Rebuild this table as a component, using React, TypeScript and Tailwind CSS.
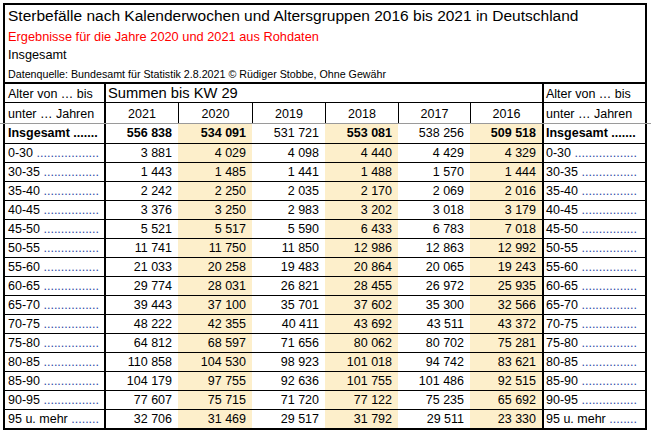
import React from "react";

type Row = { label: string; dots: number; vals: string[] };

const data: Row[] = [
  { label: "0-30", dots: 18, vals: ["3 881", "4 029", "4 098", "4 440", "4 429", "4 329"] },
  { label: "30-35", dots: 16, vals: ["1 443", "1 485", "1 441", "1 488", "1 570", "1 444"] },
  { label: "35-40", dots: 16, vals: ["2 242", "2 250", "2 035", "2 170", "2 069", "2 016"] },
  { label: "40-45", dots: 16, vals: ["3 376", "3 250", "2 983", "3 202", "3 018", "3 179"] },
  { label: "45-50", dots: 16, vals: ["5 521", "5 517", "5 590", "6 433", "6 783", "7 018"] },
  { label: "50-55", dots: 16, vals: ["11 741", "11 750", "11 850", "12 986", "12 863", "12 992"] },
  { label: "55-60", dots: 16, vals: ["21 033", "20 258", "19 483", "20 864", "20 065", "19 243"] },
  { label: "60-65", dots: 16, vals: ["29 774", "28 031", "26 821", "28 455", "26 972", "25 935"] },
  { label: "65-70", dots: 16, vals: ["39 443", "37 100", "35 701", "37 602", "35 300", "32 566"] },
  { label: "70-75", dots: 16, vals: ["48 222", "42 355", "40 411", "43 692", "43 511", "43 372"] },
  { label: "75-80", dots: 16, vals: ["64 812", "68 597", "71 656", "80 062", "80 702", "75 281"] },
  { label: "80-85", dots: 16, vals: ["110 858", "104 530", "98 923", "101 018", "94 742", "83 621"] },
  { label: "85-90", dots: 16, vals: ["104 179", "97 755", "92 636", "101 755", "101 486", "92 515"] },
  { label: "90-95", dots: 16, vals: ["77 607", "75 715", "71 720", "77 122", "75 235", "65 692"] },
  { label: "95 u. mehr", dots: 8, vals: ["32 706", "31 469", "29 517", "31 792", "29 511", "23 330"] },
];

const totals = ["556 838", "534 091", "531 721", "553 081", "538 256", "509 518"];
const totalBold = [true, true, false, true, false, true];
const years = ["2021", "2020", "2019", "2018", "2017", "2016"];
const hl = [false, true, false, true, false, true];

const rowGrid = "grid grid-cols-[101px_72px_74px_73px_73px_72px_72px_103px]";

function DotLabel({ label, dots }: { label: string; dots: number }) {
  return (
    <span className="whitespace-nowrap">
      {label} <span className="text-[#2d4aa6]">{".".repeat(dots)}</span>
    </span>
  );
}

export default function App() {
  return (
    <div className="relative w-[651px] h-[435px] bg-white overflow-hidden text-black font-['Liberation_Sans',Arial,sans-serif]">
      <div className="ml-[3px] mt-[3px] w-[644px] border-2 border-black">
        {/* Title block */}
        <div className="h-[77px] pl-[3px] flex flex-col">
          <div className="mt-[2px] h-[18px] leading-[18px] text-[15.5px] whitespace-nowrap">
            Sterbefälle nach Kalenderwochen und Altersgruppen 2016 bis 2021 in Deutschland
          </div>
          <div className="mt-[4px] h-[16px] leading-[16px] text-[12.8px] text-[#ff0000] whitespace-nowrap">
            Ergebnisse für die Jahre 2020 und 2021 aus Rohdaten
          </div>
          <div className="mt-[2px] h-[16px] leading-[16px] text-[12.7px] whitespace-nowrap">Insgesamt</div>
          <div className="mt-[5px] h-[13px] leading-[13px] text-[10.7px] whitespace-nowrap">
            Datenquelle: Bundesamt für Statistik 2.8.2021 © Rüdiger Stobbe, Ohne Gewähr
          </div>
        </div>

        {/* Table */}
        <div className="border-t-2 border-black text-[12.5px]">
          {/* Header row 1 */}
          <div className={`${rowGrid} h-[19px] border-b border-black`}>
            <div className="border-r-2 border-black pl-[3px] pt-[1px] leading-[18px] whitespace-nowrap">
              Alter von … bis
            </div>
            <div className="col-span-6 pl-[2px] leading-[18px] text-[14.7px] whitespace-nowrap">
              Summen bis KW 29
            </div>
            <div className="border-l-2 border-black pl-[2px] pt-[1px] leading-[18px] whitespace-nowrap">
              Alter von … bis
            </div>
          </div>

          {/* Header row 2 */}
          <div className={`${rowGrid} h-[21px] border-b border-[#9a9a9a]`}>
            <div className="border-r-2 border-black pl-[3px] pt-[1px] leading-[20px] whitespace-nowrap">
              unter … Jahren
            </div>
            {years.map((y, i) => (
              <div
                key={y}
                className={`${i > 0 ? "border-l border-black" : ""} pt-[1px] text-center leading-[20px]`}
              >
                {y}
              </div>
            ))}
            <div className="border-l-2 border-black pl-[2px] pt-[1px] leading-[20px] whitespace-nowrap">
              unter … Jahren
            </div>
          </div>

          {/* Totals row */}
          <div className={`${rowGrid} h-[20px] border-b border-black`}>
            <div className="border-r-2 border-black pl-[3px] leading-[19px] font-bold whitespace-nowrap">
              Insgesamt .......
            </div>
            {totals.map((v, i) => (
              <div
                key={i}
                className={`${hl[i] ? "bg-[#fdefcb]" : ""} ${totalBold[i] ? "font-bold" : ""} pr-[6px] text-right leading-[19px]`}
              >
                {v}
              </div>
            ))}
            <div className="border-l-2 border-black pl-[2px] leading-[19px] font-bold whitespace-nowrap">
              Insgesamt .......
            </div>
          </div>

          {/* Data rows */}
          {data.map((r, ri) => (
            <div
              key={r.label}
              className={`${rowGrid} ${ri < data.length - 1 ? "h-[19px] border-b border-black" : "h-[18px]"}`}
            >
              <div className="border-r-2 border-black pl-[3px] leading-[18px]">
                <DotLabel label={r.label} dots={r.dots} />
              </div>
              {r.vals.map((v, i) => (
                <div
                  key={i}
                  className={`${hl[i] ? "bg-[#fdefcb]" : ""} pr-[6px] text-right leading-[18px]`}
                >
                  {v}
                </div>
              ))}
              <div className="border-l-2 border-black pl-[2px] leading-[18px]">
                <DotLabel label={r.label} dots={r.dots} />
              </div>
            </div>
          ))}
        </div>
      </div>

      {/* Excel freeze-pane line */}
      <div className="absolute left-0 top-[123px] w-[651px] h-px bg-[#9a9a9a]" />
    </div>
  );
}
